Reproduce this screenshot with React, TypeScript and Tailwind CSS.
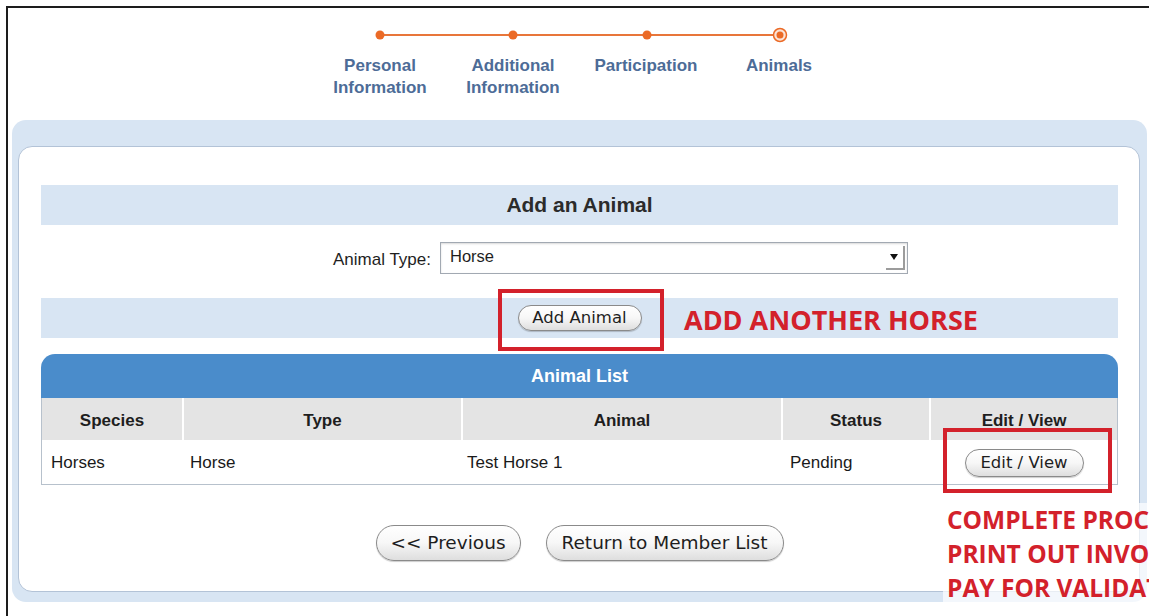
import type { ReactNode } from 'react'

const steps = [
  ['Personal', 'Information'],
  ['Additional', 'Information'],
  ['Participation'],
  ['Animals'],
]

const columns = ['Species', 'Type', 'Animal', 'Status', 'Edit / View']
const cols = 'grid grid-cols-[140px_277px_318px_146px_1fr] gap-x-[2px]'

function StepTrack() {
  return (
    <svg width="532" height="20" viewBox="0 0 532 20">
      <line x1="66" y1="10" x2="466" y2="10" stroke="#e8763a" strokeWidth="2" />
      {[66, 199, 333].map((cx) => (
        <circle key={cx} cx={cx} cy="10" r="4.5" fill="#eb6a26" />
      ))}
      <circle cx="466" cy="10" r="6.5" fill="#fbe3d6" stroke="#eb6a26" strokeWidth="1.5" />
      <circle cx="466" cy="10" r="3.5" fill="#eb6a26" />
    </svg>
  )
}

function PillButton({ children, className }: { children: ReactNode; className: string }) {
  return (
    <button
      className={
        "rounded-full border border-[#8a8a8a] bg-linear-to-b from-white via-[#f7f7f7] to-[#dedede] font-['DejaVu_Sans',sans-serif] text-[#1e1e1e] shadow-[0_1px_1px_rgba(0,0,0,0.2)] " +
        className
      }
    >
      {children}
    </button>
  )
}

export default function App() {
  return (
    <div className="relative h-[616px] w-full overflow-hidden bg-white font-['Liberation_Sans',Arial,sans-serif]">
      {/* page frame */}
      <div className="ml-[6px] mt-[6px] h-[700px] w-[1200px] border-l-2 border-t-2 border-[#1d1d1d]">
        <div className="ml-[4px] w-[1135px]">
          {/* Steps */}
          <div className="mx-auto mt-[17px] w-[532px]">
            <StepTrack />
            <div className="mt-[10px] grid grid-cols-4">
              {steps.map((lines) => (
                <div key={lines[0]} className="text-center text-[17px] font-bold leading-[22px] text-[#4d6c97]">
                  {lines.map((l) => (
                    <div key={l}>{l}</div>
                  ))}
                </div>
              ))}
            </div>
          </div>

          {/* Panel */}
          <div className="mt-[21px] rounded-[14px] bg-[#d8e5f3] pb-[10px] pl-[6px] pr-[7px] pt-[26px]">
            <div className="rounded-[14px] border border-[#b3c3d7] bg-white pb-[30px] pl-[22px] pr-[21px] pt-[38px]">
              <div className="flex h-[40px] items-center justify-center bg-[#d8e5f3] text-[21px] font-bold text-[#2b2b2b]">
                Add an Animal
              </div>

              <div className="mt-[17px] flex h-[32px] items-center pl-[292px]">
                <span className="pt-[4px] text-[17px] text-[#1e1e1e]">Animal Type:</span>
                <div className="ml-[9px] flex h-[32px] w-[468px] items-center justify-between border border-[#a2a9b2] bg-white pl-[9px] pr-[2px] shadow-[inset_0_1px_2px_rgba(0,0,0,0.15)]">
                  <span className="pb-[3px] text-[16.5px] text-[#1e1e1e]">Horse</span>
                  <div className="flex h-[24px] w-[19px] items-center justify-center border-b-2 border-r-2 border-[#9c9c9c] bg-white">
                    <svg width="8" height="6" viewBox="0 0 8 6">
                      <path d="M0 0H8L4 6Z" fill="#111" />
                    </svg>
                  </div>
                </div>
              </div>

              <div className="relative mt-[24px] flex h-[40px] items-center justify-center bg-[#d8e5f3]">
                <div className="relative">
                  <PillButton className="h-[26px] w-[124px] text-[16.5px]">Add Animal</PillButton>
                  <div className="absolute -bottom-[20px] -left-[20px] -right-[22px] -top-[16px] border-4 border-[#d3212b]" />
                </div>
                <div className="absolute left-[643px] top-[6px] font-['Open_Sans',sans-serif] text-[27px] font-bold leading-[32px] text-[#d3212b]">
                  ADD ANOTHER HORSE
                </div>
              </div>

              {/* Animal list */}
              <div className="mt-[16px]">
                <div className="flex h-[44px] items-center justify-center rounded-t-[14px] bg-[#4a8ccb] text-[18px] font-bold text-white">
                  Animal List
                </div>
                <div className="border-x border-b border-[#b7c1cc]">
                  <div className={cols + ' h-[42px] bg-white'}>
                    {columns.map((c) => (
                      <div key={c} className="flex items-center justify-center bg-[#e4e4e4] pt-[4px] text-[17px] font-bold text-[#1e1e1e]">
                        {c}
                      </div>
                    ))}
                  </div>
                  <div className={cols + ' h-[44px] items-center pt-[2px] text-[17px] text-[#1a1a1a]'}>
                    <div className="pl-[9px]">Horses</div>
                    <div className="pl-[6px]">Horse</div>
                    <div className="pl-[4px]">Test Horse 1</div>
                    <div className="pl-[7px]">Pending</div>
                    <div className="flex justify-center">
                      <div className="relative">
                        <PillButton className="h-[28px] w-[119px] text-[16.5px]">Edit / View</PillButton>
                        <div className="absolute -bottom-[16px] -left-[22px] -right-[28px] -top-[21px] border-4 border-[#d3212b]" />
                      </div>
                    </div>
                  </div>
                </div>
              </div>

              <div className="mt-[40px] flex justify-center gap-[25px]">
                <PillButton className="h-[36px] w-[145px] text-[18.5px]">&lt;&lt; Previous</PillButton>
                <PillButton className="h-[36px] w-[238px] text-[18.5px]">Return to Member List</PillButton>
              </div>
            </div>
          </div>
        </div>
      </div>

      {/* closing notes */}
      <div className="absolute left-[943px] top-[503px] w-[300px] bg-white/70 pl-[4px] font-['Open_Sans',sans-serif] text-[24.5px] font-bold leading-[34px] text-[#d3212b]">
        <div>COMPLETE PROCESS</div>
        <div>PRINT OUT INVOICE</div>
        <div>PAY FOR VALIDATION</div>
      </div>
    </div>
  )
}
